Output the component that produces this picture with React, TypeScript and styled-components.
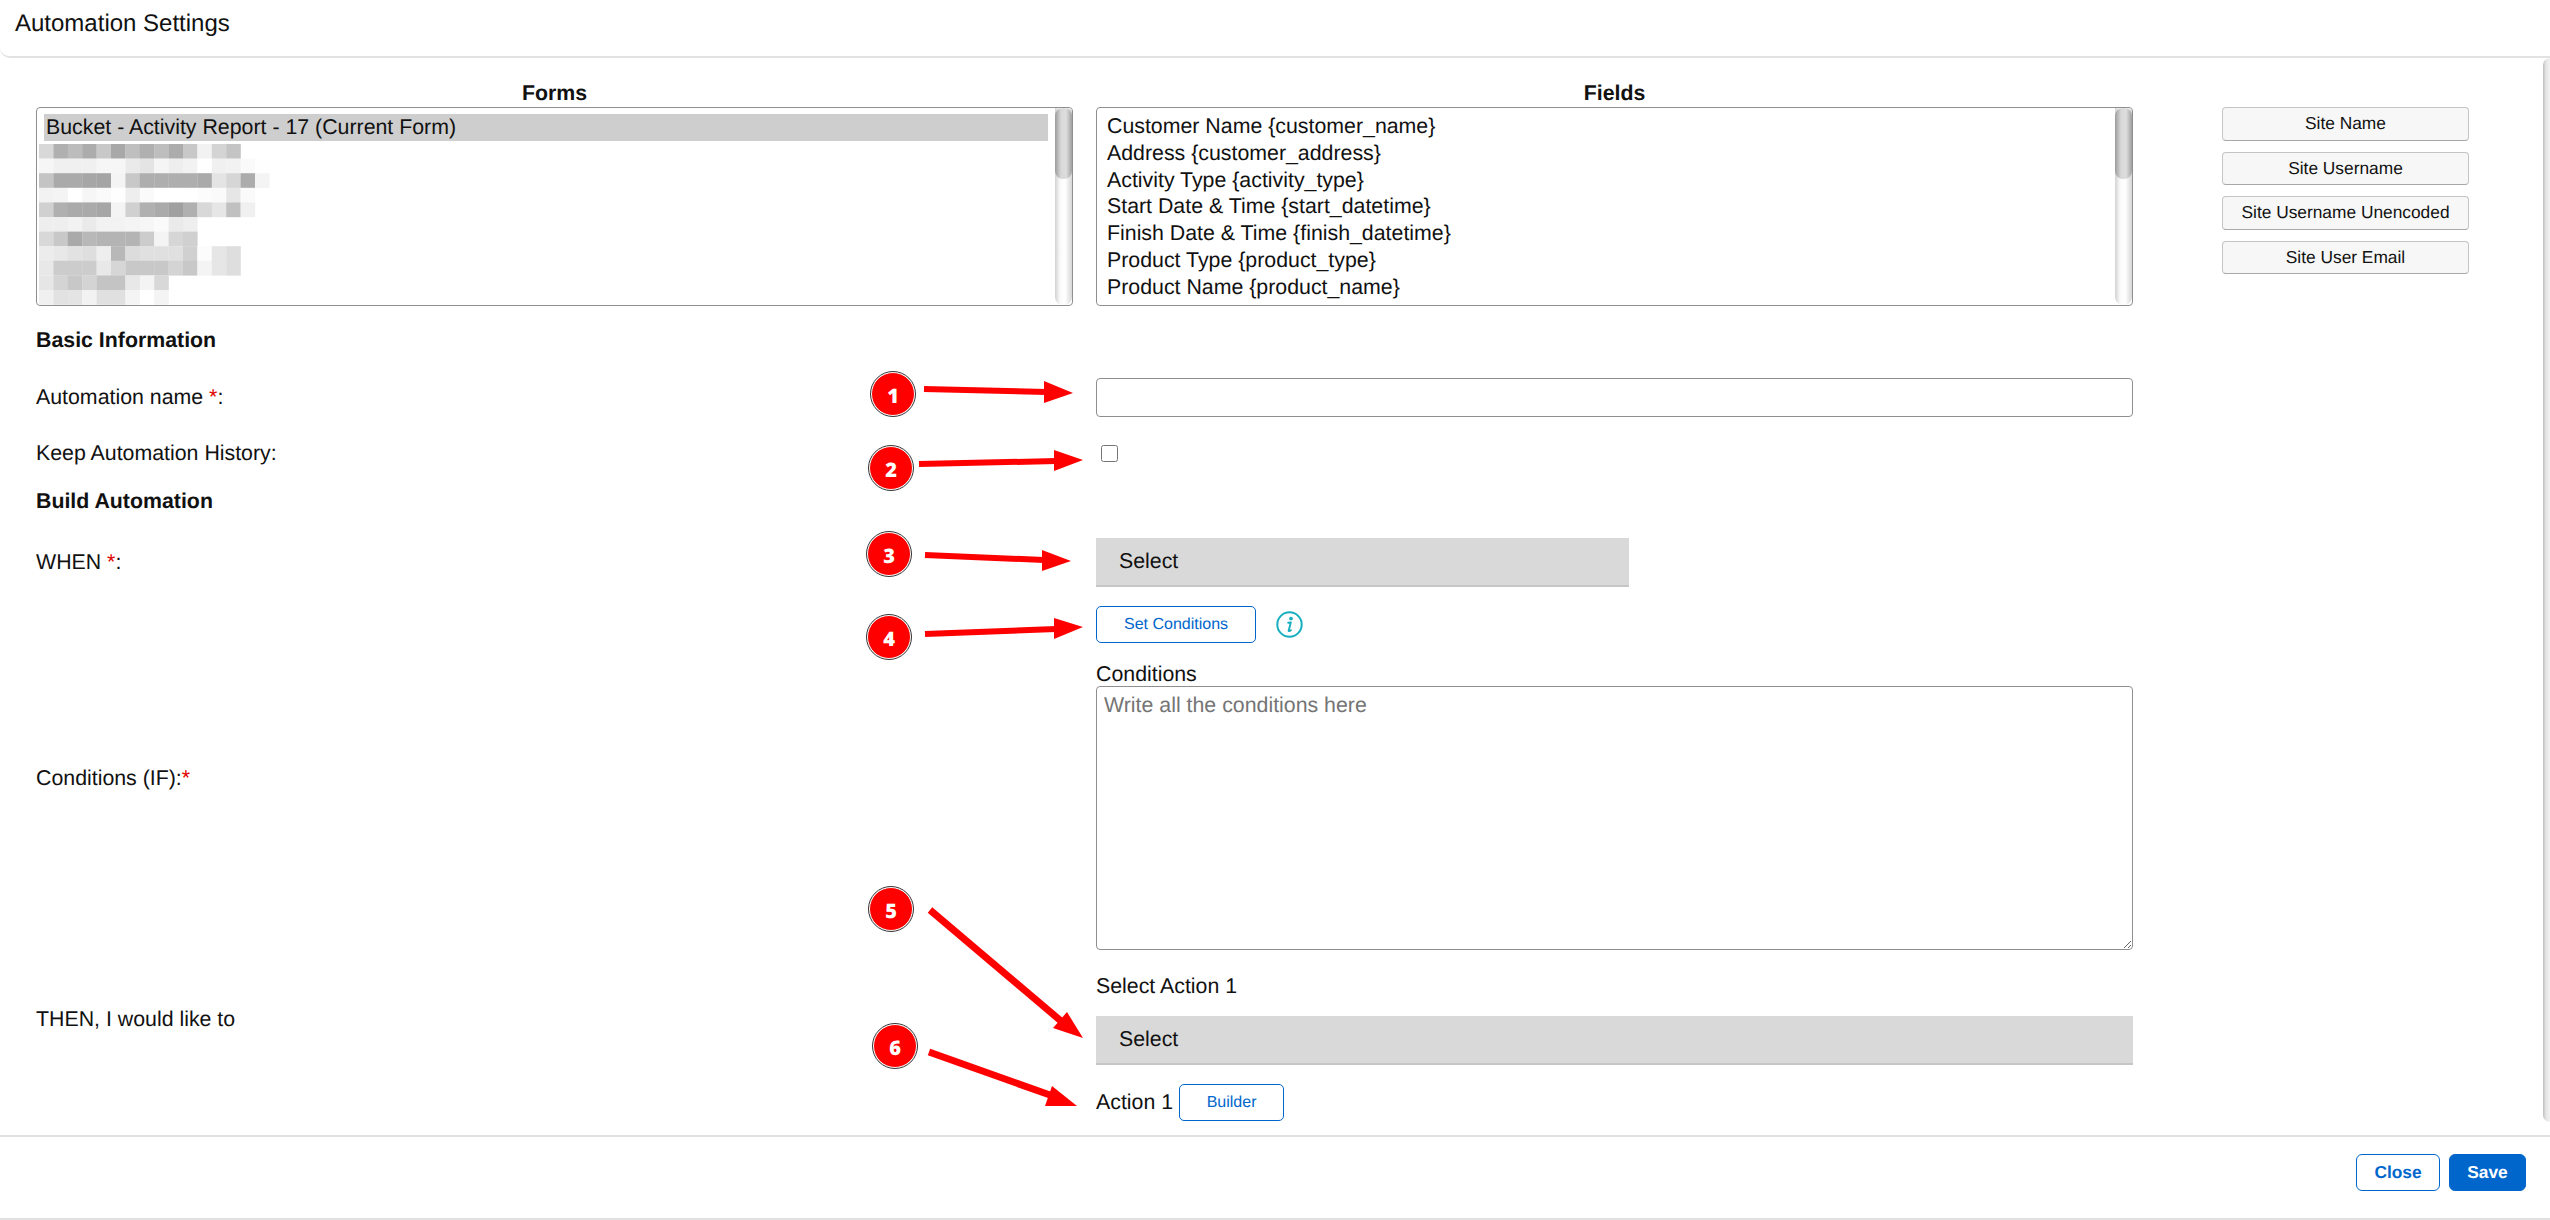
import styled, { createGlobalStyle } from 'styled-components';

const GlobalStyle = createGlobalStyle`
    html, body {
        margin: 0;
        padding: 0;
        background: #fff;
    }
    * {
        box-sizing: border-box;
        text-rendering: geometricPrecision;
    }
`;

const Page = styled.div`
    position: relative;
    width: 2550px;
    height: 1220px;
    display: flex;
    flex-direction: column;
    overflow: hidden;
    background: #fff;
    color: #111;
    font-family: "Liberation Sans", Arial, sans-serif;
    font-size: 21.33px;
    line-height: 27px;
`;

const Header = styled.header`
    height: 58px;
    flex-shrink: 0;
    padding: 10px 0 0 15px;
    border-bottom: 2px solid #e2e2e2;
    border-bottom-left-radius: 10px;
    font-size: 24px;
`;

const Body = styled.main`
    flex: 1;
    min-height: 0;
    display: flex;
    overflow: hidden;
`;

const Content = styled.div`
    flex: 1;
    padding: 22px 0 0 36px;
`;

const PageScroll = styled.div`
    width: 7px;
    margin-bottom: 13px;
    border-radius: 8px 0 0 8px;
    background: linear-gradient(to right, #bdbdbd, #e4e4e4 40%, #f2f2f2);
`;

const TopGrid = styled.section`
    display: grid;
    grid-template-columns: 1037px 1037px 247px;
    column-gap: 23px;
`;

const Column = styled.div`
    display: flex;
    flex-direction: column;
`;

const ColumnTitle = styled.div`
    text-align: center;
    font-weight: bold;
`;

const ListBox = styled.div`
    height: 199px;
    display: flex;
    border: 1px solid #8f8f8f;
    border-radius: 4px;
    overflow: hidden;
`;

const ListBody = styled.div`
    flex: 1;
    min-width: 0;
    padding: 5px 7px 0 10px;
    line-height: 26.8px;
`;

const FormsBody = styled(ListBody)`
    padding: 6px 7px 0 7px;
`;

const SelectedOption = styled.div`
    height: 27px;
    background: #cecece;
    padding-left: 2px;
`;

const BlurredRows = styled.svg`
    display: block;
    margin: 3px 0 0 -5px;
`;

const ScrollTrack = styled.div`
    width: 17px;
    flex-shrink: 0;
    border-radius: 0 0 8px 8px;
    background: linear-gradient(to right, #d2d2d2, #fafafa 30%, #fff 60%, #d6d6d6);
`;

const ScrollThumb = styled.div`
    height: 71px;
    border-radius: 8px;
    background: linear-gradient(to right, #9b9b9b, #d8d8d8 35%, #dedede 65%, #a0a0a0);
`;

const SiteColumn = styled.div`
    grid-column: 3;
    margin: 27px 0 0 66px;
    width: 247px;
    display: flex;
    flex-direction: column;
    gap: 11px;
`;

const SiteButton = styled.button`
    height: 33.5px;
    padding: 0;
    border: 1px solid #c4c4c4;
    border-bottom-color: #a8a8a8;
    border-radius: 4px;
    background: #f7f7f7;
    color: #111;
    font-family: inherit;
    font-size: 17.33px;
`;

const SectionTitle = styled.div<{ $top: number }>`
    margin-top: ${(p) => p.$top}px;
    font-weight: bold;
`;

const FormRow = styled.div<{ $top: number }>`
    margin-top: ${(p) => p.$top}px;
    display: grid;
    grid-template-columns: 1060px 1037px;
    align-items: center;
`;

const Required = styled.span`
    color: #e00000;
`;

const TextInput = styled.input`
    display: block;
    width: 100%;
    height: 39px;
    border: 1px solid #8f8f8f;
    border-radius: 4px;
`;

const CheckBox = styled.input`
    display: block;
    width: 17px;
    height: 17px;
    margin: 0 0 0 5px;
`;

const SelectBox = styled.div<{ $width: number }>`
    width: ${(p) => p.$width}px;
    height: 49px;
    padding-left: 23px;
    display: flex;
    align-items: center;
    background: #d9d9d9;
    border-bottom: 2px solid #c6c6c6;
`;

const ControlStack = styled.div`
    display: flex;
    flex-direction: column;
`;

const ButtonLine = styled.div`
    display: flex;
    align-items: center;
`;

const OutlineButton = styled.button<{ $width: number }>`
    width: ${(p) => p.$width}px;
    height: 37px;
    padding: 0;
    border: 1px solid #0066cc;
    border-radius: 5px;
    background: #fff;
    color: #0066cc;
    font-family: inherit;
    font-size: 16px;
`;

const InfoIcon = styled.svg`
    margin-left: 20px;
`;

const ConditionsLabel = styled.label`
    display: block;
    margin-top: 19px;
    line-height: 24px;
`;

const ConditionsArea = styled.textarea`
    display: block;
    width: 100%;
    height: 264px;
    padding: 5px 7px;
    border: 1px solid #8f8f8f;
    border-radius: 4px;
    font-family: inherit;
    font-size: 21.33px;
    line-height: 27px;
    color: #111;
    &::placeholder {
        color: #757575;
    }
`;

const ActionCaption = styled.div`
    margin-bottom: 16px;
`;

const ActionLine = styled(ButtonLine)`
    gap: 6px;
`;

const Footer = styled.footer`
    height: 85px;
    flex-shrink: 0;
    padding: 17px 24px 0 0;
    display: flex;
    justify-content: flex-end;
    gap: 9px;
    border-top: 2px solid #e0e0e0;
    border-bottom: 2px solid #e0e0e0;
`;

const FooterButton = styled.button<{ $primary?: boolean; $width: number }>`
    width: ${(p) => p.$width}px;
    height: 37px;
    padding: 0;
    border: 1px solid #0066cc;
    border-radius: 6px;
    background: ${(p) => (p.$primary ? '#0066cc' : '#fff')};
    color: ${(p) => (p.$primary ? '#fff' : '#0066cc')};
    font-family: inherit;
    font-size: 17.33px;
    font-weight: bold;
`;

const ArrowLayer = styled.svg`
    position: absolute;
    left: 0;
    top: 0;
    pointer-events: none;
`;

const Badge = styled.div<{ $x: number; $y: number }>`
    position: absolute;
    left: ${(p) => p.$x - 22}px;
    top: ${(p) => p.$y - 22}px;
    width: 44px;
    height: 44px;
    display: flex;
    align-items: center;
    justify-content: center;
    border-radius: 50%;
    background: #ff0000;
    border: 1px solid #fff;
    outline: 1px solid #333;
    color: #fff;
    font-family: "Open Sans", sans-serif;
    font-size: 20px;
    font-weight: 800;
    line-height: 1;
    padding-top: 4px;
`;

const fields = [
    'Customer Name {customer_name}',
    'Address {customer_address}',
    'Activity Type {activity_type}',
    'Start Date & Time {start_datetime}',
    'Finish Date & Time {finish_datetime}',
    'Product Type {product_type}',
    'Product Name {product_name}',
];

const siteButtons = ['Site Name', 'Site Username', 'Site Username Unencoded', 'Site User Email'];

// the other form names are pixelated in the picture
const blurred = [
    ['d8', 'b0', 'bc', 'ac', 'c8', 'a8', 'bf', 'b0', 'be', 'ac', 'c8', 'f2', 'd4', 'c4'],
    ['f6', 'f0', 'f0', 'f0', 'f6', 'f6', 'ea', 'e4', 'f5', 'ee', 'f2', 'ff', 'f0', 'f2', 'fa', 'fe'],
    ['c4', 'aa', 'aa', 'a6', 'a4', 'f4', 'c8', 'ae', 'ae', 'ae', 'ae', 'aa', 'e4', 'd6', 'ac', 'f4'],
    ['f2', 'f4', 'ff', 'f6', 'fa', 'fe', 'ee', 'fa', 'ff', 'ff', 'ff', 'fc', 'fa', 'e6', 'fa'],
    ['d0', 'b0', 'aa', 'aa', 'a6', 'f4', 'd0', 'b0', 'aa', 'a0', 'b0', 'd8', 'e6', 'c0', 'f0'],
    ['ee', 'ee', 'f2', 'ea', 'f2', 'f2', 'f4', 'f6', 'fa', 'ea', 'ee'],
    ['d8', 'c8', 'aa', 'b8', 'b4', 'b4', 'b4', 'cc', 'f4', 'd6', 'd0'],
    ['ec', 'e8', 'e2', 'de', 'ee', 'b8', 'dc', 'e0', 'e0', 'e0', 'd0', 'fc', 'e6', 'de'],
    ['e8', 'cc', 'cc', 'cc', 'e8', 'd6', 'c8', 'c8', 'c8', 'd4', 'c8', 'f4', 'e6', 'de'],
    ['e6', 'd4', 'c8', 'd4', 'c4', 'c4', 'e8', 'f4', 'd8'],
    ['f0', 'e2', 'e4', 'f2', 'e0', 'e0', 'f4', 'ff', 'f4'],
];

const badges = [
    { n: 1, x: 893, y: 394 },
    { n: 2, x: 891, y: 468 },
    { n: 3, x: 889, y: 554 },
    { n: 4, x: 889, y: 637 },
    { n: 5, x: 891, y: 909 },
    { n: 6, x: 895, y: 1046 },
];

const arrows = [
    { line: '924,389 1046,392', head: '1044,381 1073,393 1044,403', width: 6 },
    { line: '919,464 1056,461', head: '1054,450 1083,460 1054,471', width: 6 },
    { line: '925,555 1044,560', head: '1042,550 1071,561 1042,571', width: 6 },
    { line: '925,634 1056,629', head: '1054,618 1083,627 1054,639', width: 6 },
    { line: '930,910 1061,1021', head: '1067,1012 1083,1038 1053,1028', width: 7 },
    { line: '929,1052 1050,1095', head: '1052,1086 1077,1106 1045,1106', width: 7 },
];

function App() {
    return (
        <Page>
            <GlobalStyle />
            <Header>Automation Settings</Header>
            <Body>
                <Content>
                    <TopGrid>
                        <Column>
                            <ColumnTitle>Forms</ColumnTitle>
                            <ListBox>
                                <FormsBody>
                                    <SelectedOption>Bucket - Activity Report - 17 (Current Form)</SelectedOption>
                                    <BlurredRows width="240" height="161">
                                        {blurred.map((row, r) =>
                                            row.map((shade, c) => (
                                                <rect
                                                    key={`${r}-${c}`}
                                                    x={c * 14.4}
                                                    y={r * 14.6}
                                                    width="14.6"
                                                    height="14.8"
                                                    fill={`#${shade}${shade}${shade}`}
                                                />
                                            )),
                                        )}
                                    </BlurredRows>
                                </FormsBody>
                                <ScrollTrack>
                                    <ScrollThumb />
                                </ScrollTrack>
                            </ListBox>
                        </Column>
                        <Column>
                            <ColumnTitle>Fields</ColumnTitle>
                            <ListBox>
                                <ListBody>
                                    {fields.map((field) => (
                                        <div key={field}>{field}</div>
                                    ))}
                                </ListBody>
                                <ScrollTrack>
                                    <ScrollThumb />
                                </ScrollTrack>
                            </ListBox>
                        </Column>
                        <SiteColumn>
                            {siteButtons.map((label) => (
                                <SiteButton key={label}>{label}</SiteButton>
                            ))}
                        </SiteColumn>
                    </TopGrid>

                    <SectionTitle $top={21}>Basic Information</SectionTitle>
                    <FormRow $top={24}>
                        <div>
                            Automation name <Required>*</Required>:
                        </div>
                        <TextInput type="text" />
                    </FormRow>
                    <FormRow $top={23}>
                        <div>Keep Automation History:</div>
                        <CheckBox type="checkbox" />
                    </FormRow>
                    <SectionTitle $top={21}>Build Automation</SectionTitle>
                    <FormRow $top={23}>
                        <div>
                            WHEN <Required>*</Required>:
                        </div>
                        <SelectBox $width={533}>Select</SelectBox>
                    </FormRow>
                    <FormRow $top={19}>
                        <div>
                            Conditions (IF):<Required>*</Required>
                        </div>
                        <ControlStack>
                            <ButtonLine>
                                <OutlineButton $width={160}>Set Conditions</OutlineButton>
                                <InfoIcon width="27" height="27" viewBox="0 0 27 27" fill="none">
                                    <circle cx="13.5" cy="13.5" r="12.2" stroke="#17afbf" strokeWidth="2" />
                                    <circle cx="15" cy="7.6" r="1.9" fill="#17afbf" />
                                    <path
                                        d="M12.2 11.8 L14.8 11.4 L12.7 19.4 Q12.4 20.9 15 19.2"
                                        stroke="#17afbf"
                                        strokeWidth="1.9"
                                        strokeLinecap="round"
                                        strokeLinejoin="round"
                                    />
                                </InfoIcon>
                            </ButtonLine>
                            <ConditionsLabel>Conditions</ConditionsLabel>
                            <ConditionsArea placeholder="Write all the conditions here" />
                        </ControlStack>
                    </FormRow>
                    <FormRow $top={23}>
                        <div>THEN, I would like to</div>
                        <ControlStack>
                            <ActionCaption>Select Action 1</ActionCaption>
                            <SelectBox $width={1037}>Select</SelectBox>
                        </ControlStack>
                    </FormRow>
                    <FormRow $top={19}>
                        <div />
                        <ActionLine>
                            Action 1<OutlineButton $width={105}>Builder</OutlineButton>
                        </ActionLine>
                    </FormRow>
                </Content>
                <PageScroll />
            </Body>
            <Footer>
                <FooterButton $width={84}>Close</FooterButton>
                <FooterButton $primary $width={77}>
                    Save
                </FooterButton>
            </Footer>

            <ArrowLayer width="2550" height="1220">
                {arrows.map((arrow) => (
                    <g key={arrow.head}>
                        <polyline points={arrow.line} stroke="#ff0000" strokeWidth={arrow.width} fill="none" />
                        <polygon points={arrow.head} fill="#ff0000" />
                    </g>
                ))}
            </ArrowLayer>
            {badges.map((badge) => (
                <Badge key={badge.n} $x={badge.x} $y={badge.y}>
                    {badge.n}
                </Badge>
            ))}
        </Page>
    );
}

export default App;
